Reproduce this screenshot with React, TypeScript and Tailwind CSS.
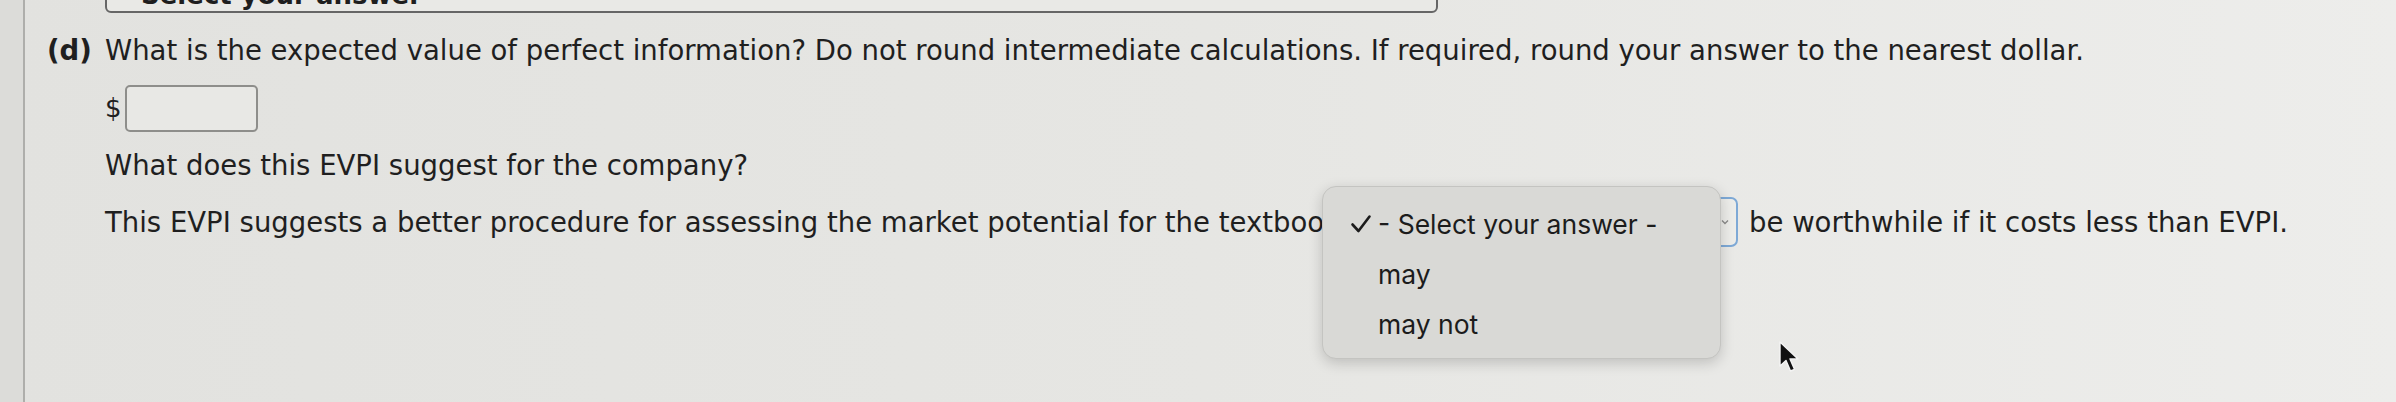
import React from 'react';

const options = ['may', 'may not'];

const Cursor = () => (
  <svg width="22" height="32" viewBox="0 0 22 32" className="absolute left-[1778px] top-[341px]">
    <path d="M2 1 L2 25 L8 19.5 L12.5 30 L16.5 28.3 L12 18 L20 18 Z" fill="#111" stroke="#f4f4f4" strokeWidth="1.4" strokeLinejoin="round" />
  </svg>
);

const SelectMenu = () => (
  <div className="relative ml-[10px] w-[388px] h-[50px] shrink-0 rounded-[7px] border-2 border-[#7ea9d6] bg-[#ecece9]">
    <svg width="10" height="10" viewBox="0 0 10 10" className="absolute right-[6px] top-[18px]">
      <path d="M2 3.5 L5 6.5 L8 3.5" fill="none" stroke="#8a8a8a" strokeWidth="1.3" />
    </svg>
    {/* open popup */}
    <div className="absolute left-[-30px] top-[-13px] w-[399px] h-[173px] rounded-[14px] border border-[#c4c4c1] bg-[#d9d9d6] shadow-[0_4px_14px_rgba(0,0,0,0.18)] font-['Inter',sans-serif] text-[26.5px] text-[#1c1c1c] pt-[12px]">
      <div className="flex items-center h-[50px]">
        <svg width="22" height="20" viewBox="0 0 22 20" className="ml-[27px] mr-[6px]">
          <path d="M2.5 10.5 L8.5 17 L19.5 2.5" fill="none" stroke="#1c1c1c" strokeWidth="2.6" strokeLinecap="round" strokeLinejoin="round" />
        </svg>
        <span>- Select your answer -</span>
      </div>
      {options.map((o) => (
        <div key={o} className="flex items-center h-[50px] pl-[55px]">
          {o}
        </div>
      ))}
    </div>
  </div>
);

export default function App() {
  return (
    <div className="relative flex w-[2396px] h-[402px] overflow-hidden bg-gradient-to-r from-[#e2e2df] via-[#e6e6e3] to-[#ededeb] font-['DejaVu_Sans',sans-serif] text-[#1f1f1f]">
      {/* left margin strip */}
      <div className="w-[25px] shrink-0 border-r-2 border-[#aeaeab] bg-[#dcdcd9]" />

      <div className="flex-1 flex flex-col">
        {/* previous part's select, cut off by the top edge */}
        <div className="ml-[80px] mt-[-47px] w-[1333px] h-[60px] shrink-0 flex items-end rounded-[6px] border-2 border-[#666] bg-[#e9e9e6] pl-[34px] pb-[3px]">
          <span className="text-[26px] leading-none font-bold text-[#1e1e1e]">Select your answer</span>
        </div>

        {/* (d) question */}
        <div className="flex mt-[19px] pl-[22px] text-[27.5px] leading-[36px]">
          <span className="w-[58px] font-bold">(d)</span>
          <span>
            What is the expected value of perfect information? Do not round intermediate calculations. If required, round your answer to the nearest dollar.
          </span>
        </div>

        {/* answer input */}
        <div className="flex items-center mt-[17px] pl-[80px]">
          <span className="text-[26px]">$</span>
          <div className="ml-[3px] w-[133px] h-[47px] rounded-[5px] border-2 border-[#8e8e8b] bg-[#e8e8e5]" />
        </div>

        <div className="mt-[15px] pl-[80px] text-[27.5px] leading-[36px]">What does this EVPI suggest for the company?</div>

        <div className="flex items-center h-[50px] mt-[14px] pl-[80px] text-[27.5px] leading-[36px] whitespace-nowrap">
          <span>This EVPI suggests a better procedure for assessing the market potential for the textbook</span>
          <SelectMenu />
          <span className="ml-[11px]">be worthwhile if it costs less than EVPI.</span>
        </div>
      </div>

      <Cursor />
    </div>
  );
}
